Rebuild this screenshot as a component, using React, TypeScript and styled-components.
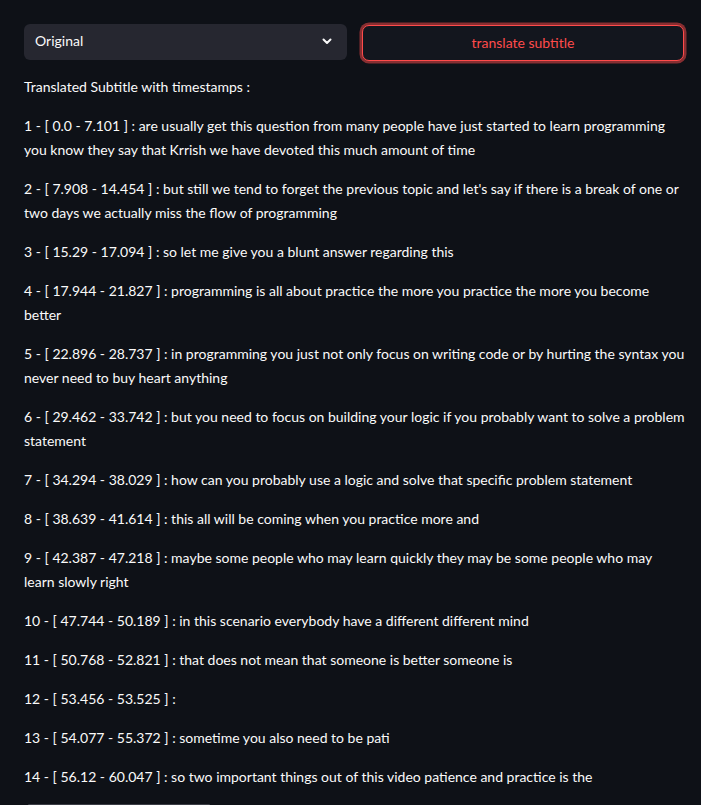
import React from "react";
import styled, { createGlobalStyle } from "styled-components";

const Global = createGlobalStyle`
  html, body { margin: 0; padding: 0; background: #0e1117; }
  body { font-family: Lato, "Open Sans", sans-serif; color: #fafafa; }
  * { box-sizing: border-box; }
`;

const Page = styled.div`
  width: 701px;
  height: 805px;
  overflow: hidden;
  padding: 24px 16px 0 24px;
  display: flex;
  flex-direction: column;
`;

const Controls = styled.div`
  display: grid;
  grid-template-columns: 1fr 1fr;
  gap: 15px;
  margin-bottom: 14px;
`;

const Select = styled.div`
  height: 36px;
  background: #262730;
  border-radius: 6px;
  display: flex;
  align-items: center;
  justify-content: space-between;
  padding: 0 14px 2px 11px;
  font-size: 14px;
  line-height: 1;
  color: #fafafa;
`;

const Button = styled.button`
  height: 36px;
  margin: 1px 1px 0 0;
  padding: 0 0 2px 0;
  background: #13161e;
  border: 1px solid #ff4b4b;
  border-radius: 7px;
  box-shadow: 0 0 0 2.5px rgba(255, 75, 75, 0.5);
  color: #ff4b4b;
  font-family: inherit;
  font-size: 14px;
  cursor: pointer;
`;

const Para = styled.p`
  margin: 0 0 15px 0;
  font-size: 14px;
  line-height: 24px;
`;

const BottomBar = styled.div`
  margin: 0 0 0 4px;
  width: 182px;
  height: 8px;
  border-radius: 4px 4px 0 0;
  background: #3b3d45;
`;

const items: [string, string][] = [
  ["0.0 - 7.101", "are usually get this question from many people have just started to learn programming you know they say that Krrish we have devoted this much amount of time"],
  ["7.908 - 14.454", "but still we tend to forget the previous topic and let's say if there is a break of one or two days we actually miss the flow of programming"],
  ["15.29 - 17.094", "so let me give you a blunt answer regarding this"],
  ["17.944 - 21.827", "programming is all about practice the more you practice the more you become better"],
  ["22.896 - 28.737", "in programming you just not only focus on writing code or by hurting the syntax you never need to buy heart anything"],
  ["29.462 - 33.742", "but you need to focus on building your logic if you probably want to solve a problem statement"],
  ["34.294 - 38.029", "how can you probably use a logic and solve that specific problem statement"],
  ["38.639 - 41.614", "this all will be coming when you practice more and"],
  ["42.387 - 47.218", "maybe some people who may learn quickly they may be some people who may learn slowly right"],
  ["47.744 - 50.189", "in this scenario everybody have a different different mind"],
  ["50.768 - 52.821", "that does not mean that someone is better someone is"],
  ["53.456 - 53.525", ""],
  ["54.077 - 55.372", "sometime you also need to be pati"],
  ["56.12 - 60.047", "so two important things out of this video patience and practice is the"],
];

export default function App() {
  return (
    <Page>
      <Global />
      <Controls>
        <Select>
          <span>Original</span>
          <svg width="12" height="12" viewBox="0 0 12 12" fill="none">
            <path d="M2.5 4.5 L6 8 L9.5 4.5" stroke="#fafafa" strokeWidth="2" strokeLinecap="round" strokeLinejoin="round" />
          </svg>
        </Select>
        <Button>translate subtitle</Button>
      </Controls>
      <Para>Translated Subtitle with timestamps :</Para>
      {items.map(([t, s], i) => (
        <Para key={i}>
          {i + 1} - [ {t} ] : {s}
        </Para>
      ))}
      <BottomBar />
    </Page>
  );
}
